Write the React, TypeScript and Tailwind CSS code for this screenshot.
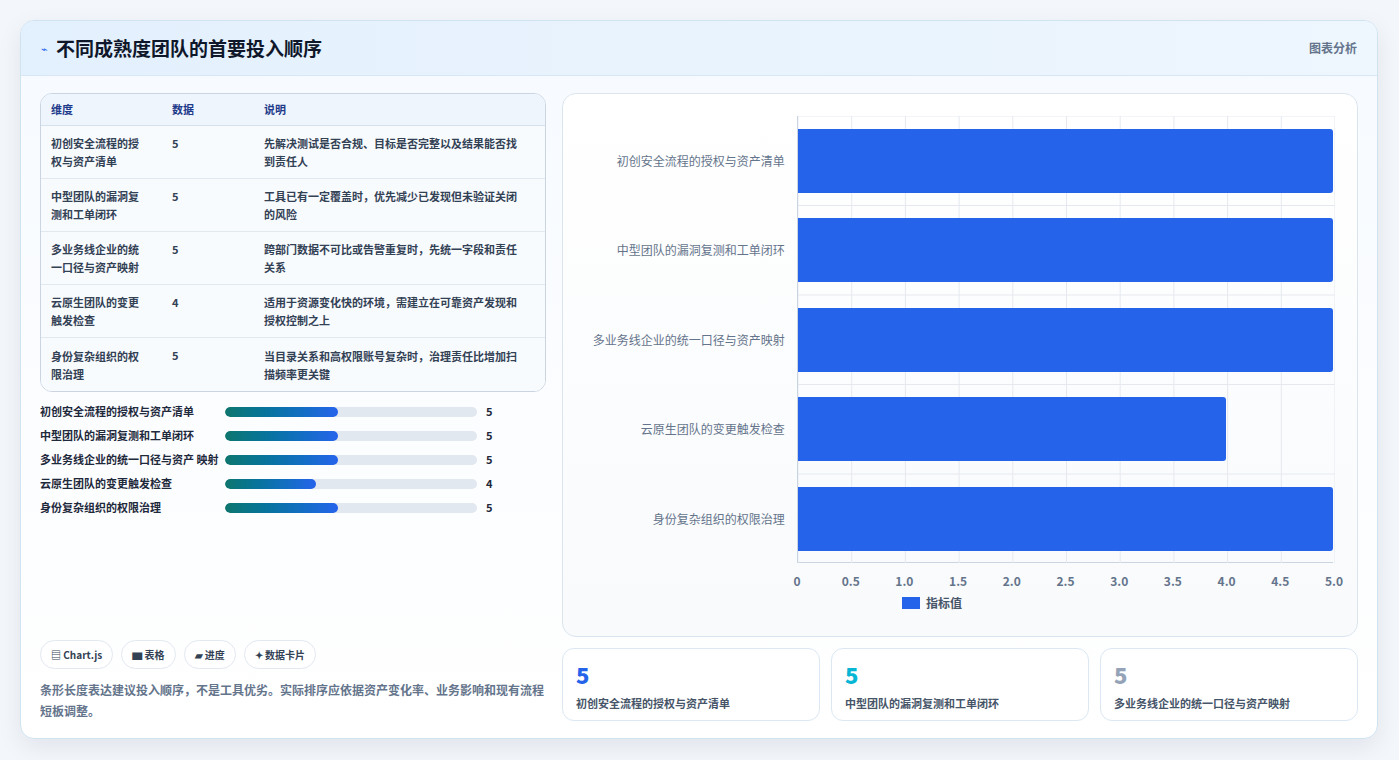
import React from "react";

const rows = [
  ["初创安全流程的授权与资产清单", 5, "先解决测试是否合规、目标是否完整以及结果能否找到责任人"],
  ["中型团队的漏洞复测和工单闭环", 5, "工具已有一定覆盖时，优先减少已发现但未验证关闭的风险"],
  ["多业务线企业的统一口径与资产映射", 5, "跨部门数据不可比或告警重复时，先统一字段和责任关系"],
  ["云原生团队的变更触发检查", 4, "适用于资源变化快的环境，需建立在可靠资产发现和授权控制之上"],
  ["身份复杂组织的权限治理", 5, "当目录关系和高权限账号复杂时，治理责任比增加扫描频率更关键"],
] as const;

const tableNames = ["初创安全流程的授\n权与资产清单", "中型团队的漏洞复\n测和工单闭环", "多业务线企业的统\n一口径与资产映射", "云原生团队的变更\n触发检查", "身份复杂组织的权\n限治理"];
const descs = ["先解决测试是否合规、目标是否完整以及结果能否找\n到责任人", "工具已有一定覆盖时，优先减少已发现但未验证关闭\n的风险", "跨部门数据不可比或告警重复时，先统一字段和责任\n关系", "适用于资源变化快的环境，需建立在可靠资产发现和\n授权控制之上", "当目录关系和高权限账号复杂时，治理责任比增加扫\n描频率更关键"];

const font = { fontFamily: '"Noto Sans CJK SC", "Noto Sans", sans-serif' };

export default function App() {
  const ticks = ["0", "0.5", "1.0", "1.5", "2.0", "2.5", "3.0", "3.5", "4.0", "4.5", "5.0"];
  return (
    <div className="w-[1399px] h-[760px] bg-[#f3f6fa] pt-[20px] pl-[20px]" style={font}>
      <div className="w-[1358px] h-[719px] rounded-[14px] border border-[#cfe3f0] bg-gradient-to-b from-[#f6faff] to-white shadow-[0_8px_24px_rgba(15,40,80,0.08)] overflow-hidden flex flex-col">
        <div className="h-[55px] flex items-center justify-between px-[20px] bg-gradient-to-r from-[#e3f0fd] to-[#eef6fe] border-b border-[#d8e7f5]">
          <div className="flex items-center gap-[8px]">
            <span className="text-[#2563eb] text-[11px]">⌁</span>
            <span className="text-[19px] font-bold text-[#0f172a]">不同成熟度团队的首要投入顺序</span>
          </div>
          <span className="text-[12px] font-semibold text-[#64748b]">图表分析</span>
        </div>
        <div className="flex gap-[16px] px-[19px] pt-[17px]">
          <div className="w-[509px] flex flex-col">
            <div className="rounded-[12px] border border-[#cbd5e1] overflow-hidden bg-white">
              <div className="flex h-[32px] items-center bg-[#eef5fd] border-b border-[#d6e0ea] text-[11px] font-bold text-[#1e3a8a]">
                <div className="w-[131px] pl-[10px]">维度</div>
                <div className="w-[92px]">数据</div>
                <div>说明</div>
              </div>
              {rows.map((r, i) => (
                <div key={i} className={`flex h-[53px] items-center text-[11px] leading-[18px] text-[#334155] bg-[#f8fbfe] ${i < 4 ? "border-b border-[#e2e8f0]" : ""}`}>
                  <div className="w-[131px] pl-[10px] font-bold whitespace-pre-line self-center">{tableNames[i]}</div>
                  <div className="w-[92px] font-bold self-start pt-[8px]">{r[1]}</div>
                  <div className="flex-1 font-semibold whitespace-pre-line">{descs[i]}</div>
                </div>
              ))}
            </div>
            <div className="flex flex-col gap-[7px] mt-[11px]">
              {rows.map((r, i) => (
                <div key={i} className="flex items-center text-[11px] font-bold text-[#1e293b]">
                  <div className="w-[185px] leading-[17px]">{i === 2 ? "多业务线企业的统一口径与资产\n映射" : r[0]}</div>
                  <div className="w-[252px] h-[10px] rounded-full bg-[#e2e8f0] overflow-hidden">
                    <div className="h-full rounded-full bg-gradient-to-r from-[#0f766e] to-[#2563eb]" style={{ width: r[1] === 5 ? "45%" : "36%" }} />
                  </div>
                  <div className="ml-[9px]">{r[1]}</div>
                </div>
              ))}
            </div>
            <div className="flex-1" />
            <div className="flex gap-[8px] mt-[108px]">
              {["▤ Chart.js", "▆ 表格", "▰ 进度", "✦ 数据卡片"].map((c) => (
                <span key={c} className="h-[29px] px-[10px] flex items-center rounded-full border border-[#e2e8f0] bg-white text-[10px] font-bold text-[#334155]">{c}</span>
              ))}
            </div>
            <p className="mt-[10px] text-[12px] leading-[21px] font-semibold text-[#64748b]">条形长度表达建议投入顺序，不是工具优劣。实际排序应依据资产变化率、业务影响和现有流程短板调整。</p>
          </div>
          <div className="w-[796px] flex flex-col">
            <div className="h-[544px] rounded-[14px] border border-[#dbe5ef] bg-gradient-to-b from-white to-[#f8fafc] pt-[22px] pr-[24px] flex flex-col">
              <div className="flex">
                <div className="w-[234px] flex flex-col">
                  {rows.map((r, i) => (
                    <div key={i} className="h-[89.5px] flex items-center justify-end pr-[12px] text-[12px] text-[#64748b]">{r[0]}</div>
                  ))}
                </div>
                <div className="relative w-[537px] h-[447px] border-l border-[#cbd5e1] border-b">
                  <svg className="absolute inset-0" width="537" height="447">
                    {ticks.map((_, i) => (
                      <line key={i} x1={i * 53.7} x2={i * 53.7} y1={0} y2={447} stroke="#e5e9ef" />
                    ))}
                    {[0, 1, 2, 3, 4].map((i) => (
                      <line key={i} x1={0} x2={537} y1={i * 89.5} y2={i * 89.5} stroke="#e5e9ef" />
                    ))}
                  </svg>
                  <div className="relative flex flex-col">
                    {rows.map((r, i) => (
                      <div key={i} className="h-[89.5px] flex items-center">
                        <div className="h-[64px] bg-[#2563eb] rounded-r-[3px]" style={{ width: `${(r[1] / 5) * 100}%` }} />
                      </div>
                    ))}
                  </div>
                </div>
              </div>
              <div className="flex ml-[234px] w-[537px] relative h-[30px]">
                {ticks.map((t, i) => (
                  <span key={t} className="absolute top-[8px] text-[12px] font-semibold text-[#64748b] -translate-x-1/2" style={{ left: i * 53.7 }}>{t}</span>
                ))}
              </div>
              <div className="flex items-center justify-center gap-[6px] ml-[234px] w-[270px] text-[12px] font-semibold text-[#475569]">
                <span className="w-[18px] h-[12px] bg-[#2563eb]" />指标值
              </div>
            </div>
            <div className="grid grid-cols-3 gap-[11px] mt-[11px]">
              {[["#2563eb", rows[0][0]], ["#06b6d4", rows[1][0]], ["#94a3b8", rows[2][0]]].map(([c, t]) => (
                <div key={t} className="h-[73px] rounded-[12px] border border-[#dbe7f3] bg-white px-[13px] pt-[10px]">
                  <div className="text-[22px] font-black leading-[30px]" style={{ color: c }}>5</div>
                  <div className="text-[11px] font-semibold text-[#475569] mt-[6px]">{t}</div>
                </div>
              ))}
            </div>
          </div>
        </div>
      </div>
    </div>
  );
}
